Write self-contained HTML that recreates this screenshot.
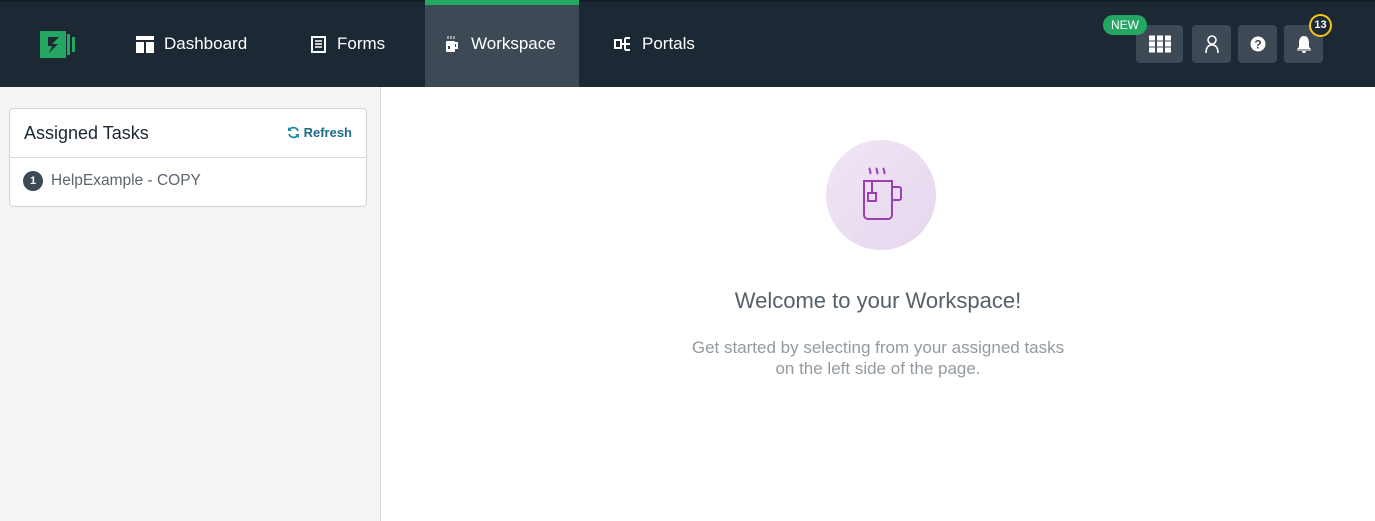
<!DOCTYPE html>
<html><head><style>
*{margin:0;padding:0;box-sizing:border-box}
body{width:1375px;height:521px;overflow:hidden;font-family:"Liberation Sans",sans-serif;background:#fff;position:relative}
.nav{position:absolute;left:0;top:0;width:1375px;height:87px;background:#1c2834;border-top:2px solid #151d25}
.item{position:absolute;top:-1px;height:85px;color:#fff;font-size:17px;line-height:85px}
.item svg{position:absolute;top:35px}
.btn{position:absolute;top:23px;width:39px;height:38px;background:#3d4a56;border-radius:4px}
.btn svg{position:absolute;left:50%;top:50%;transform:translate(-50%,-50%)}
.side{position:absolute;left:0;top:87px;width:381px;height:434px;background:#f4f4f4;border-right:1px solid #d8d8d8}
.card{position:absolute;left:9px;top:21px;width:358px;height:99px;background:#fff;border:1px solid #d0d4d8;border-radius:4px}
</style></head><body>
<div class="nav">
 <svg style="position:absolute;left:40px;top:27px" width="36" height="30"><rect x="0" y="2" width="26" height="27" fill="#25a764"/><rect x="27" y="5" width="3" height="21" fill="#25a764"/><rect x="32" y="8" width="3" height="15" fill="#25a764"/><path d="M8 8h11l-7 7h6l-9 9 3-7h-4z" fill="#1c2834"/></svg>
 <div class="item" style="left:136px"><svg width="18" height="17" style="left:0"><rect x="0" y="0" width="18" height="4" fill="#fff"/><rect x="0" y="6" width="8" height="11" fill="#fff"/><rect x="10" y="6" width="8" height="11" fill="#fff"/></svg><span style="margin-left:28px">Dashboard</span></div>
 <div class="item" style="left:311px"><svg width="15" height="17" style="left:0"><rect x="1" y="1" width="13" height="15" fill="none" stroke="#fff" stroke-width="2"/><path d="M4 5h7M4 8h7M4 11h7" stroke="#fff" stroke-width="1.5"/></svg><span style="margin-left:26px">Forms</span></div>
 <div style="position:absolute;left:425px;top:-2px;width:154px;height:87px;background:#3d4a56;border-top:5px solid #25a764"></div>
 <div class="item" style="left:445px"><svg width="15" height="17" style="left:0"><path d="M3 0v3M6 0v3M9 0v3" stroke="#fff"/><rect x="1" y="5" width="9" height="11" rx="1" fill="#fff"/><path d="M10 7h2v5h-2" fill="none" stroke="#fff" stroke-width="2"/><rect x="3" y="10" width="2" height="3" fill="#3d4a56"/></svg><span style="margin-left:26px">Workspace</span></div>
 <div class="item" style="left:614px"><svg width="18" height="17" style="left:0"><rect x="1" y="4" width="6" height="8" fill="none" stroke="#fff" stroke-width="2"/><path d="M7 8h4M11 2v12M11 2h5M11 8h5M11 14h5" stroke="#fff" stroke-width="2" fill="none"/></svg><span style="margin-left:28px">Portals</span></div>
 <div class="btn" style="left:1136px;width:47px"><svg width="22" height="17"><g fill="#fff"><rect x="0" y="0" width="6" height="5"/><rect x="8" y="0" width="6" height="5"/><rect x="16" y="0" width="6" height="5"/><rect x="0" y="6" width="6" height="5"/><rect x="8" y="6" width="6" height="5"/><rect x="16" y="6" width="6" height="5"/><rect x="0" y="12" width="6" height="5"/><rect x="8" y="12" width="6" height="5"/><rect x="16" y="12" width="6" height="5"/></g></svg></div>
 <div style="position:absolute;left:1103px;top:13px;width:44px;height:20px;background:#25a764;border-radius:10px;color:#fff;font-size:12px;line-height:20px;text-align:center">NEW</div>
 <div class="btn" style="left:1192px"><svg width="14" height="18"><circle cx="7" cy="5" r="4" fill="none" stroke="#fff" stroke-width="1.6"/><path d="M1 18c0-5 2-8 6-8s6 3 6 8" fill="none" stroke="#fff" stroke-width="1.6"/></svg></div>
 <div class="btn" style="left:1238px"><svg width="16" height="16"><circle cx="8" cy="8" r="7.5" fill="#fff"/><text x="8" y="12.5" font-size="12" font-weight="bold" text-anchor="middle" fill="#3d4a56" font-family="Liberation Sans">?</text></svg></div>
 <div class="btn" style="left:1284px"><svg width="18" height="18"><path d="M9 1c-4 0-5 4-5 7v4l-2 2h14l-2-2V8c0-3-1-7-5-7z" fill="#fff"/><path d="M2 15h14" stroke="#fff"/><path d="M7 16a2 2 0 0 0 4 0" fill="#fff"/></svg></div>
 <div style="position:absolute;left:1309px;top:12px;width:23px;height:23px;border:2px solid #f5c518;border-radius:50%;background:#1c2834;color:#fff;font-size:11px;font-weight:bold;line-height:19px;text-align:center">13</div>
</div>
<div class="side">
 <div class="card">
  <div style="height:49px;border-bottom:1px solid #d8dce0;position:relative">
   <span style="position:absolute;left:14px;top:14px;font-size:18px;color:#1c2834">Assigned Tasks</span>
   <span style="position:absolute;right:14px;top:16px;font-size:13px;font-weight:bold;color:#1c6e86"><svg width="13" height="13" style="vertical-align:-2px;margin-right:4px"><path d="M11 5A5 5 0 0 0 2 4M2 8a5 5 0 0 0 9 1" fill="none" stroke="#1c8aa0" stroke-width="1.8"/><path d="M1 1v4h4zM12 12V8H8z" fill="#1c8aa0"/></svg>Refresh</span>
  </div>
  <div style="position:relative;height:48px">
   <div style="position:absolute;left:13px;top:13px;width:20px;height:20px;border-radius:50%;background:#3d4a56;color:#fff;font-size:11px;font-weight:bold;line-height:20px;text-align:center">1</div>
   <span style="position:absolute;left:41px;top:14px;font-size:15.5px;color:#5b6570">HelpExample - COPY</span>
  </div>
 </div>
</div>
<div style="position:absolute;left:826px;top:140px;width:110px;height:110px;border-radius:50%;background:linear-gradient(135deg,#f0e6f4,#e6d6ee)"></div>
<svg style="position:absolute;left:860px;top:165px" width="50" height="60"><g fill="none" stroke="#9b3fb5" stroke-width="2"><path d="M10 3c-2 2 2 3 0 6M17 3c-2 2 2 3 0 6M24 3c-2 2 2 3 0 6"/><path d="M4 16h28v34a4 4 0 0 1-4 4H8a4 4 0 0 1-4-4z"/><path d="M32 22h7a2 2 0 0 1 2 2v9a2 2 0 0 1-2 2h-7"/><path d="M12 16v12"/><rect x="8" y="28" width="8" height="8"/></g></svg>
<div style="position:absolute;left:381px;width:994px;top:288px;text-align:center;font-size:22px;color:#56606a">Welcome to your Workspace!</div>
<div style="position:absolute;left:381px;width:994px;top:337px;text-align:center;font-size:17px;line-height:21px;color:#939aa1">Get started by selecting from your assigned tasks<br>on the left side of the page.</div>
</body></html>
